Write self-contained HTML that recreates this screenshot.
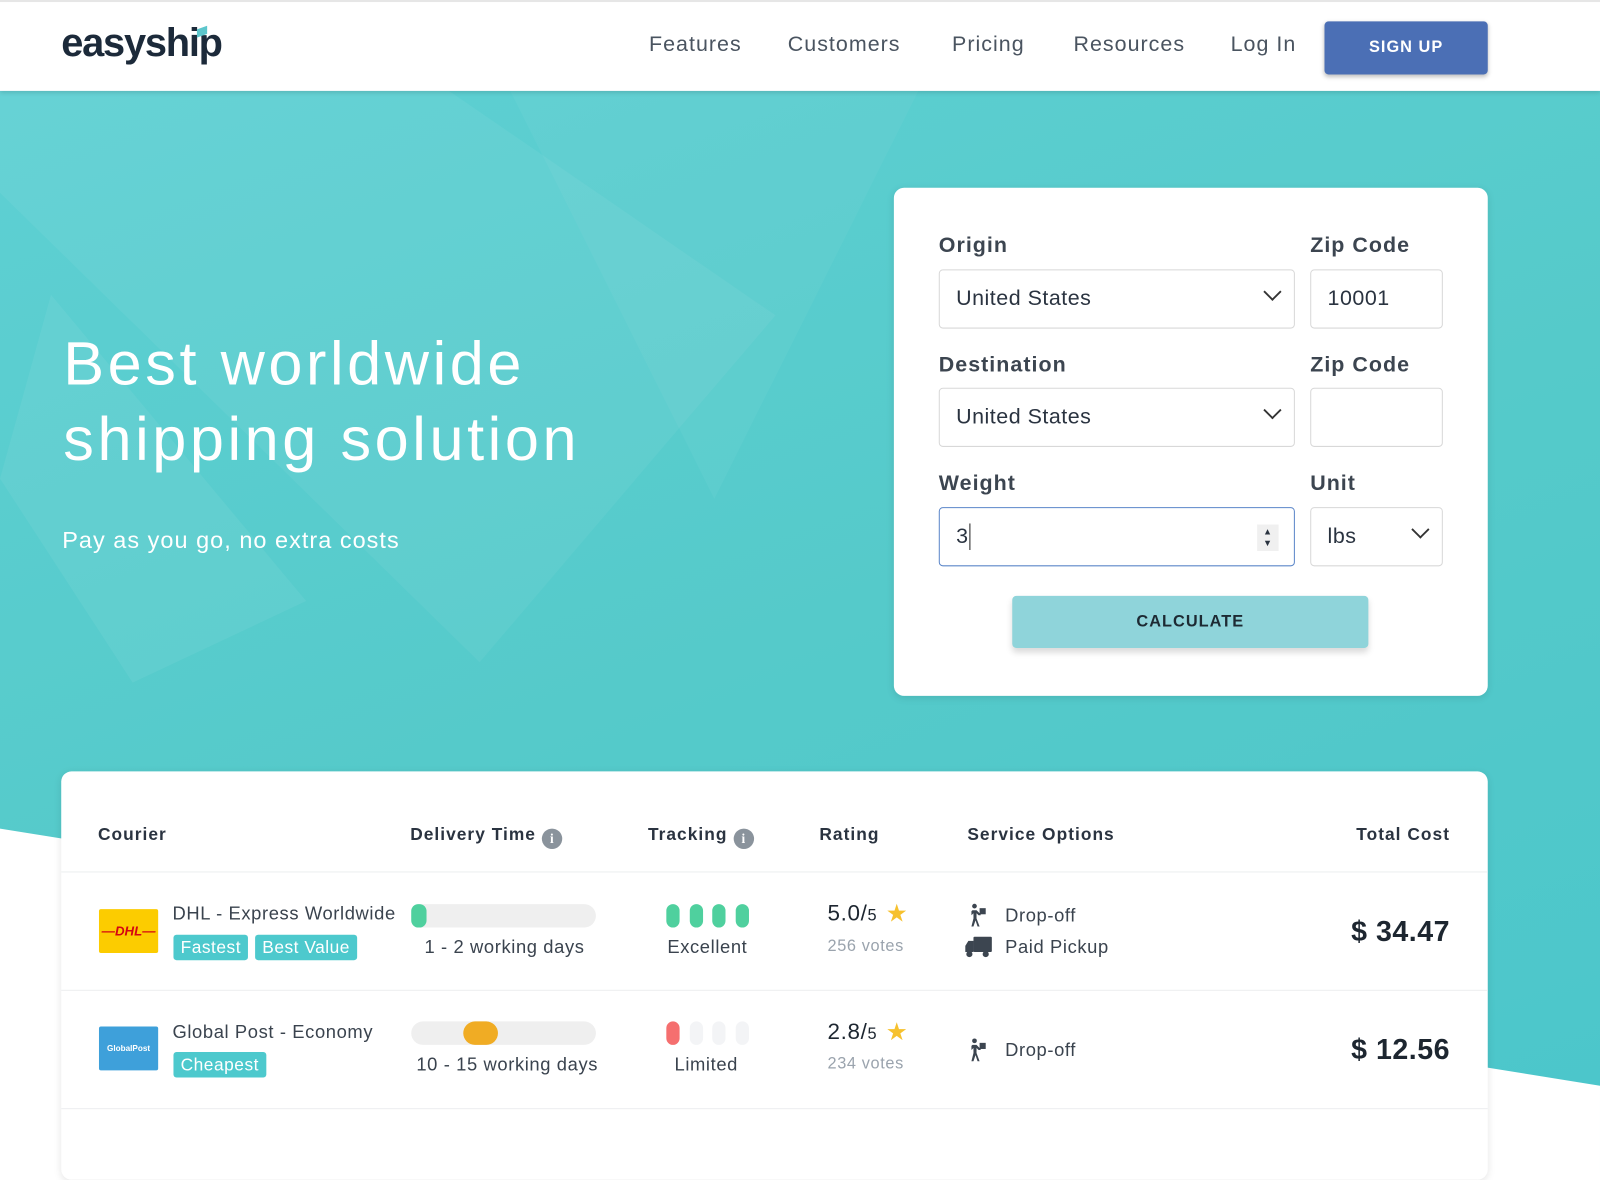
<!DOCTYPE html>
<html><head><meta charset="utf-8"><style>
*{box-sizing:border-box;margin:0;padding:0}
body{width:1600px;height:1131px;overflow:hidden;font-family:"Liberation Sans",sans-serif;background:#fff;position:relative;color:#2a3340}
#w{position:absolute;left:0;top:0;width:1568px;height:1109px;transform:scale(1.020408);transform-origin:0 0}
.hdr{position:absolute;top:0;left:0;width:1568px;height:89px;background:#fff;border-top:2px solid #e6e6e6;box-shadow:0 2px 4px rgba(0,0,0,.12);z-index:5}
.logo{position:absolute;left:60px;top:19px;font-size:39px;font-weight:bold;color:#1c2a3a;letter-spacing:-1.2px}
.nav{position:absolute;top:30px;font-size:21px;color:#4a5460;letter-spacing:1px}
.signup{position:absolute;left:1298px;top:19px;width:160px;height:52px;background:#4b6fb5;border-radius:4px;color:#fff;font-weight:bold;font-size:16px;letter-spacing:1px;text-align:center;line-height:52px;box-shadow:0 2px 4px rgba(0,0,0,.25)}
.hero{position:absolute;top:89px;left:0;width:1568px;height:1060px;background:linear-gradient(160deg,#5ed0d3 0%,#55caca 50%,#4bc6cb 100%);overflow:hidden}
.h1{position:absolute;left:62px;top:231px;font-size:60px;color:#fff;line-height:74px;letter-spacing:3.5px}
.sub{position:absolute;left:61px;top:427px;font-size:23px;color:#fff;letter-spacing:1px}
.card{position:absolute;left:876px;top:184px;width:582px;height:498px;background:#fff;border-radius:10px;box-shadow:0 2px 8px rgba(0,0,0,.1)}
.lbl{position:absolute;font-size:21px;font-weight:bold;color:#3c4550;letter-spacing:1px}
.inp{position:absolute;height:58px;border:1px solid #d8d8d8;border-radius:4px;font-size:21px;color:#2a3340;padding-left:16px;line-height:56px;letter-spacing:.5px}
.chev{position:absolute;right:14px;width:14px;height:14px;border-right:2px solid #333;border-bottom:2px solid #333;transform:rotate(45deg) scale(.9);top:14px}
.calc{position:absolute;left:116px;top:400px;width:349px;height:51px;background:#8fd4da;border-radius:4px;text-align:center;line-height:51px;font-weight:bold;font-size:16px;letter-spacing:1px;color:#1d2a33;box-shadow:0 4px 6px rgba(0,0,0,.15)}
.tbl{position:absolute;left:60px;top:756px;width:1398px;height:400px;background:#fff;border-radius:10px;box-shadow:0 2px 8px rgba(0,0,0,.1);z-index:3}
.th{position:absolute;top:52px;font-size:17px;font-weight:bold;color:#2a3340;letter-spacing:1px}
.info{display:inline-block;width:20px;height:20px;border-radius:50%;background:#8a939c;color:#fff;font-size:13px;text-align:center;line-height:20px;vertical-align:-3px;margin-left:6px;font-family:"Liberation Serif",serif;font-weight:bold}
.row{position:absolute;left:0;width:1398px;border-top:1px solid #eceef0}
.t{position:absolute;font-size:18px;color:#3a434e;letter-spacing:.6px;white-space:nowrap}
.tag{position:absolute;height:25px;background:#4dc9cd;color:#fff;font-size:17px;line-height:25px;padding:0 7px;border-radius:3px;letter-spacing:.5px}
.bar{position:absolute;width:181px;height:23px;background:#efefef;border-radius:12px}
.pill{position:absolute;width:13px;height:23px;border-radius:7px}
.price{position:absolute;right:37px;font-size:28px;font-weight:bold;color:#1d2630;letter-spacing:.5px}
.star{position:absolute;color:#f6c12e;font-size:24px}
.ic{position:absolute}
</style></head><body><div id="w">
<div class="hdr">
<div class="logo">easyship<span style="position:absolute;left:133px;top:6px;width:10px;height:8px;background:#5cc6cc;transform:skewY(-20deg)"></span></div>
<div class="nav" style="left:636px">Features</div>
<div class="nav" style="left:772px">Customers</div>
<div class="nav" style="left:933px">Pricing</div>
<div class="nav" style="left:1052px">Resources</div>
<div class="nav" style="left:1206px">Log In</div>
<div class="signup">SIGN UP</div>
</div>
<div class="hero">
<svg width="1568" height="1060" style="position:absolute;left:0;top:0">
<polygon points="0,380 50,200 300,500 130,580" fill="#fff" opacity=".06"/>
<polygon points="0,0 440,0 760,220 470,560 0,100" fill="#fff" opacity=".05"/>
<polygon points="500,0 900,0 700,400" fill="#fff" opacity=".04"/>
<polygon points="0,723 1568,975 1568,1060 0,1060" fill="#fff"/>
</svg>
<div class="h1">Best worldwide<br>shipping solution</div>
<div class="sub">Pay as you go, no extra costs</div>
</div>
<div class="card" style="z-index:4">
<div class="lbl" style="left:44px;top:45px">Origin</div>
<div class="lbl" style="left:408px;top:45px">Zip Code</div>
<div class="inp" style="left:44px;top:80px;width:349px">United States<span class="chev"></span></div>
<div class="inp" style="left:408px;top:80px;width:130px">10001</div>
<div class="lbl" style="left:44px;top:162px">Destination</div>
<div class="lbl" style="left:408px;top:162px">Zip Code</div>
<div class="inp" style="left:44px;top:196px;width:349px">United States<span class="chev"></span></div>
<div class="inp" style="left:408px;top:196px;width:130px"></div>
<div class="lbl" style="left:44px;top:278px">Weight</div>
<div class="lbl" style="left:408px;top:278px">Unit</div>
<div class="inp" style="left:44px;top:313px;width:349px;border-color:#5b86c9">3<span style="border-left:1.5px solid #222;margin-left:1px;height:26px;display:inline-block;vertical-align:middle"></span><span style="position:absolute;right:15px;top:16px;width:21px;height:26px;background:#f0f0f0;font-size:9px;line-height:11px;text-align:center;padding-top:2px">▲<br>▼</span></div>
<div class="inp" style="left:408px;top:313px;width:130px">lbs<span class="chev"></span></div>
<div class="calc">CALCULATE</div>
</div>
<div class="tbl">
<div class="th" style="left:36px">Courier</div>
<div class="th" style="left:342px">Delivery Time<span class="info">i</span></div>
<div class="th" style="left:575px">Tracking<span class="info">i</span></div>
<div class="th" style="left:743px">Rating</div>
<div class="th" style="left:888px">Service Options</div>
<div class="th" style="right:37px">Total Cost</div>
<div class="row" style="top:98px;height:116px">
<div style="position:absolute;left:37px;top:36px;width:58px;height:43px;background:#fccc00;border-radius:2px;color:#d40511;font-weight:bold;font-style:italic;font-size:13px;text-align:center;line-height:43px">—DHL—</div>
<div class="t" style="left:109px;top:30px">DHL - Express Worldwide</div>
<div class="tag" style="left:110px;top:61px">Fastest</div>
<div class="tag" style="left:190px;top:61px">Best Value</div>
<div class="bar" style="left:343px;top:31px"><div class="pill" style="left:0;width:15px;background:#4fd09e"></div></div>
<div class="t" style="left:356px;top:63px">1 - 2 working days</div>
<div class="pill" style="left:593px;top:31px;background:#4fd09e"></div><div class="pill" style="left:616px;top:31px;background:#4fd09e"></div><div class="pill" style="left:638px;top:31px;background:#4fd09e"></div><div class="pill" style="left:661px;top:31px;background:#4fd09e"></div>
<div class="t" style="left:594px;top:63px">Excellent</div>
<div class="t" style="left:751px;top:27px;font-size:22px;color:#1d2630">5.0/<span style="font-size:16px">5</span></div>
<div class="star" style="left:808px;top:26px">★</div>
<div class="t" style="left:751px;top:64px;font-size:16px;color:#9aa3ad">256 votes</div>
<svg class="ic" style="left:890px;top:30px" width="18" height="24" viewBox="0 0 18 24" fill="#3c4550"><circle cx="5" cy="3" r="2.3"/><rect x="10" y="5" width="6" height="6"/><path d="M3 7h4l3 3h1v2h-2l-2-2v5l3 8H8l-2-6-2 6H2l2-8V10l-2 2V8z"/></svg>
<svg class="ic" style="left:885px;top:62px" width="28" height="22" viewBox="0 0 28 22" fill="#3c4550"><rect x="9" y="1" width="18" height="15" rx="1"/><path d="M1 10l3-5h5v11H1z"/><circle cx="5" cy="18" r="3"/><circle cx="21" cy="18" r="3"/></svg>
<div class="t" style="left:925px;top:32px">Drop-off</div>
<div class="t" style="left:925px;top:63px">Paid Pickup</div>
<div class="price" style="top:42px">$ 34.47</div>
</div>
<div class="row" style="top:214px;height:116px">
<div style="position:absolute;left:37px;top:35px;width:58px;height:43px;background:#3ea0da;border-radius:2px;color:#fff;font-weight:bold;font-size:8px;text-align:center;line-height:43px">GlobalPost</div>
<div class="t" style="left:109px;top:30px">Global Post - Economy</div>
<div class="tag" style="left:110px;top:60px">Cheapest</div>
<div class="bar" style="left:343px;top:30px"><div class="pill" style="left:51px;width:34px;height:23px;background:#f0ac24;border-radius:12px"></div></div>
<div class="t" style="left:348px;top:62px">10 - 15 working days</div>
<div class="pill" style="left:593px;top:30px;background:#f56f6f"></div><div class="pill" style="left:616px;top:30px;background:#f3f4f6"></div><div class="pill" style="left:638px;top:30px;background:#f3f4f6"></div><div class="pill" style="left:661px;top:30px;background:#f3f4f6"></div>
<div class="t" style="left:601px;top:62px">Limited</div>
<div class="t" style="left:751px;top:27px;font-size:22px;color:#1d2630">2.8/<span style="font-size:16px">5</span></div>
<div class="star" style="left:808px;top:26px">★</div>
<div class="t" style="left:751px;top:63px;font-size:16px;color:#9aa3ad">234 votes</div>
<svg class="ic" style="left:890px;top:46px" width="18" height="24" viewBox="0 0 18 24" fill="#3c4550"><circle cx="5" cy="3" r="2.3"/><rect x="10" y="5" width="6" height="6"/><path d="M3 7h4l3 3h1v2h-2l-2-2v5l3 8H8l-2-6-2 6H2l2-8V10l-2 2V8z"/></svg>
<div class="t" style="left:925px;top:48px">Drop-off</div>
<div class="price" style="top:42px">$ 12.56</div>
</div>
<div class="row" style="top:330px;height:70px"></div>
</div>
</div></body></html>
